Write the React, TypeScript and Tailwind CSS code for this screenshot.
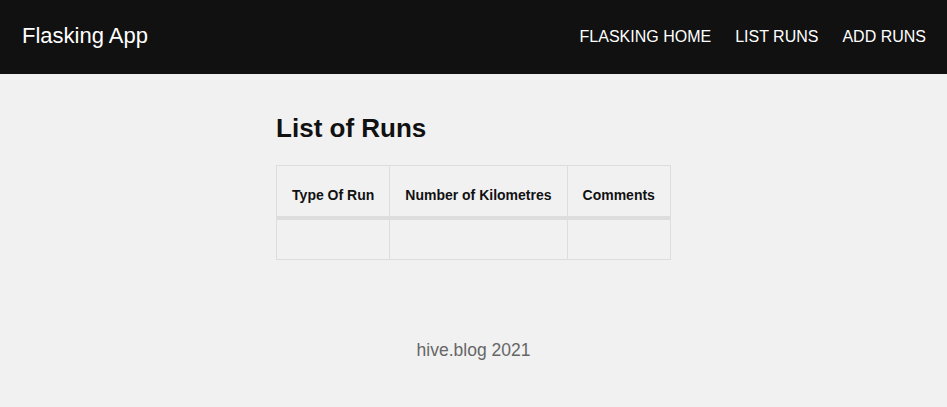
const links = ['FLASKING HOME', 'LIST RUNS', 'ADD RUNS'];
const columns = ['Type Of Run', 'Number of Kilometres', 'Comments'];

export default function App() {
  return (
    <div className="min-h-[407px] bg-[#f1f1f1] font-['Liberation_Sans',Arial,sans-serif] text-[#111]">
      <nav className="flex h-[74px] items-center justify-between bg-[#111111] pl-[22px] pr-[21px] text-white">
        <a className="pb-[3px] text-[22px]">Flasking App</a>
        <div className="flex gap-6 text-base">
          {links.map((l) => (
            <a key={l}>{l}</a>
          ))}
        </div>
      </nav>

      <main className="flex justify-center pt-[35px]">
        <div>
          <h1 className="mb-[18px] text-[26px] leading-[38px] font-bold">List of Runs</h1>
          <table className="border-collapse border border-[#dddddd] text-sm">
            <thead>
              <tr className="h-[52px] border-b-[4px] border-[#dddddd]">
                {columns.map((c) => (
                  <th key={c} className="border border-[#dddddd] px-[15px] pt-[9px] font-bold">
                    {c}
                  </th>
                ))}
              </tr>
            </thead>
            <tbody>
              <tr className="h-[42px]">
                {columns.map((c) => (
                  <td key={c} className="border border-[#dddddd]"></td>
                ))}
              </tr>
            </tbody>
          </table>
        </div>
      </main>

      <footer className="pt-[77px] pb-[47px] text-center text-[17.5px] text-[#666666]">hive.blog 2021</footer>
    </div>
  );
}
